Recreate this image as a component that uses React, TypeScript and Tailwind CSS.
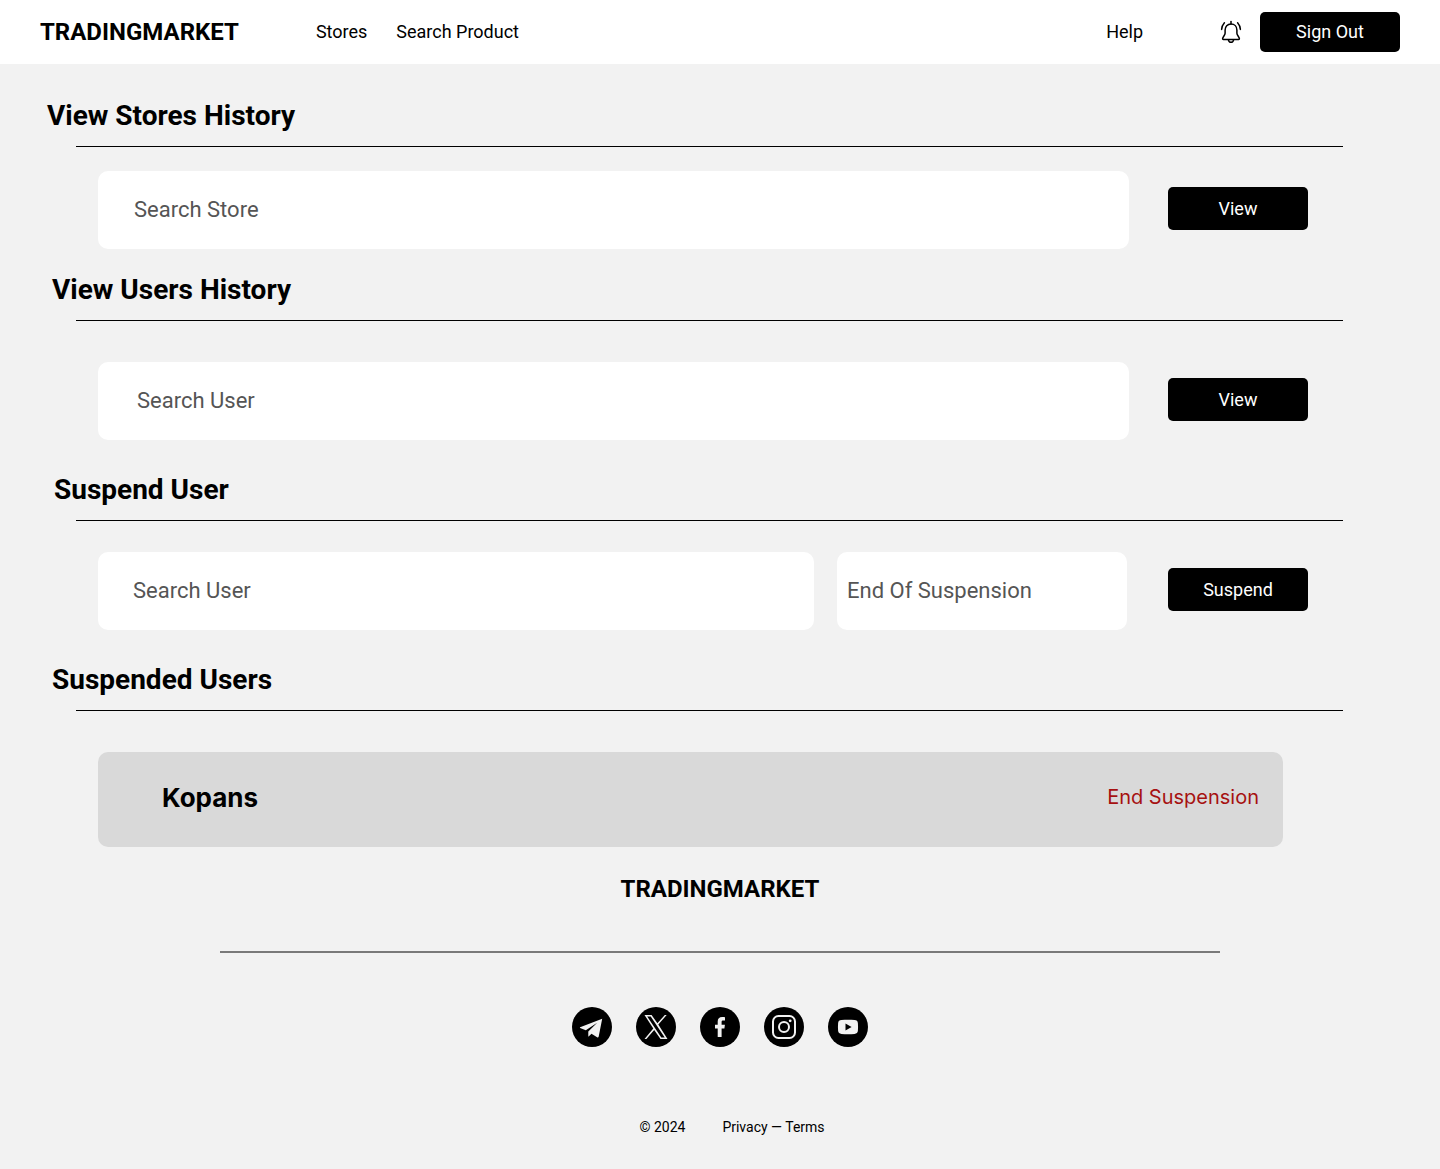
import React from "react";

const fieldClass =
  "h-[78px] min-w-0 rounded-[10px] bg-white pb-0.5 text-[22px] text-black outline-none placeholder:text-[#555555] placeholder:opacity-100";

function BellIcon() {
  return (
    <svg viewBox="0 0 24 24" className="size-6" fill="none" stroke="currentColor" strokeWidth="1.5" strokeLinecap="round" strokeLinejoin="round" aria-hidden="true">
      <path d="M12 1.5V4" />
      <path d="M12 4C8.4 4 6.1 6.7 6.1 10V13.2C6.1 15.4 3.6 17 3.6 18.8C3.6 19.2 3.9 19.5 4.3 19.5H19.7C20.1 19.5 20.4 19.2 20.4 18.8C20.4 17 17.9 15.4 17.9 13.2V10C17.9 6.7 15.6 4 12 4Z" />
      <path d="M9.4 19.8C9.7 21.4 10.7 22.3 12 22.3S14.3 21.4 14.6 19.8" />
      <path d="M5.4 2.8C3.8 4.6 2.8 6.8 2.6 9.4" />
      <path d="M18.6 2.8C20.2 4.6 21.2 6.8 21.4 9.4" />
    </svg>
  );
}

function Disc({ label, children }: { label: string; children: React.ReactNode }) {
  return (
    <a href="#" aria-label={label} className="size-10 rounded-full bg-black text-[#f2f2f2]">
      <svg viewBox="0 0 40 40" className="size-10" fill="none" aria-hidden="true">
        {children}
      </svg>
    </a>
  );
}

function Section({ title, indent, gap, children }: { title: string; indent: string; gap: string; children: React.ReactNode }) {
  return (
    <section>
      <h2 className={`${indent} text-[28px] leading-[34px] font-bold`}>{title}</h2>
      <div className="mt-[13px] mr-[97px] ml-[76px] border-t border-black" />
      <div className={`${gap} mr-[132px] ml-[98px] flex items-center`}>{children}</div>
    </section>
  );
}

function Action({ children }: { children: React.ReactNode }) {
  return (
    <button type="button" className="mb-[3px] h-[43px] w-[140px] shrink-0 rounded-[5px] bg-black text-lg text-white">
      {children}
    </button>
  );
}

export default function App() {
  return (
    <div className="min-h-screen bg-[#f2f2f2] font-['Roboto',sans-serif] text-black">
      <header className="flex h-16 items-center bg-white px-10">
        <a href="#" className="text-2xl font-bold">TRADINGMARKET</a>
        <nav className="ml-[77px] flex flex-1 items-center gap-[29px] text-lg">
          <a href="#">Stores</a>
          <a href="#">Search Product</a>
          <a href="#" className="ml-auto">Help</a>
        </nav>
        <button type="button" aria-label="Notifications" className="ml-[76px]">
          <BellIcon />
        </button>
        <button type="button" className="ml-[17px] h-10 w-[140px] rounded-[5px] bg-black text-lg text-white">
          Sign Out
        </button>
      </header>

      <main className="pt-[35px]">
        <Section title="View Stores History" indent="pl-[47px]" gap="mt-6">
          <input type="text" aria-label="Search Store" placeholder="Search Store" className={`${fieldClass} mr-[39px] flex-1 px-9`} />
          <Action>View</Action>
        </Section>
        <div className="h-6" />
        <Section title="View Users History" indent="pl-[52px]" gap="mt-[41px]">
          <input type="text" aria-label="Search User" placeholder="Search User" className={`${fieldClass} mr-[39px] flex-1 px-[39px]`} />
          <Action>View</Action>
        </Section>
        <div className="h-[33px]" />
        <Section title="Suspend User" indent="pl-[54px]" gap="mt-[31px]">
          <input type="text" aria-label="User to suspend" placeholder="Search User" className={`${fieldClass} mr-[23px] flex-1 px-[35px]`} />
          <input type="text" aria-label="End Of Suspension" placeholder="End Of Suspension" className={`${fieldClass} mr-[41px] w-[290px] px-[10px]`} />
          <Action>Suspend</Action>
        </Section>
        <div className="h-[33px]" />
        <Section title="Suspended Users" indent="pl-[52px]" gap="mt-[41px]">
          <div className="mr-[25px] flex h-[95px] flex-1 items-center justify-between rounded-[10px] bg-[#d9d9d9] pr-6 pb-1 pl-16 font-['Inter',sans-serif]">
            <span className="text-[26px] font-bold">Kopans</span>
            <button type="button" className="pb-0.5 text-xl text-[#a61111]">End Suspension</button>
          </div>
        </Section>
      </main>

      <footer className="flex flex-col items-center pt-[26px] pb-8">
        <p className="text-2xl font-bold">TRADINGMARKET</p>
        <div className="mt-[46px] w-full max-w-[1000px] border-t-2 border-[#7a7a7a]" />
        <div className="mt-[54px] flex gap-6">
          <Disc label="Telegram">
            <path fill="currentColor" d="M30.2 11.8L8.1 20.2C7.8 20.4 7.8 20.8 8.1 20.9L13.8 23.2L25.2 15.8L16.3 24.4V29.7L19.5 26.8L25.1 30.3C25.8 30.7 26.5 30.4 26.7 29.6L30.2 11.8Z" />
          </Disc>
          <Disc label="X">
            <path fill="currentColor" fillRule="evenodd" d="M8.5 8H15.6L21.4 16.3L28.8 8H30.7L22.3 17.5L31.5 32H24.5L18.2 22.9L10.4 32H8.5L17.3 21.6L8.5 8ZM11.2 9.5L25.3 30.6H28.7L14.7 9.5H11.2Z" />
          </Disc>
          <Disc label="Facebook">
            <path fill="currentColor" d="M17.7 30V21.4H15V17.8H17.7V14.4C17.7 11.6 19.2 10 22.2 10C23.5 10 24.8 10.2 25 10.3V13.6H23.2C21.8 13.6 21.6 14.2 21.6 15.3V17.8H24.9L24.4 21.4H21.6V30H17.7Z" />
          </Disc>
          <Disc label="Instagram">
            <rect x="9" y="9" width="22" height="22" rx="5.5" stroke="currentColor" strokeWidth="2" />
            <circle cx="20" cy="20" r="5" stroke="currentColor" strokeWidth="2" />
            <circle cx="26.2" cy="13.8" r="1.4" fill="currentColor" />
          </Disc>
          <Disc label="YouTube">
            <path fill="currentColor" fillRule="evenodd" d="M13.5 13.1C17.5 12.7 22.5 12.7 26.5 13.1C28.7 13.2 29.7 14.2 29.9 16.2C30.1 18.6 30.1 21.4 29.9 23.8C29.7 25.8 28.7 26.8 26.5 26.9C22.5 27.3 17.5 27.3 13.5 26.9C11.3 26.8 10.3 25.8 10.1 23.8C9.9 21.4 9.9 18.6 10.1 16.2C10.3 14.2 11.3 13.2 13.5 13.1ZM17.5 16.6V23.4L23.6 20L17.5 16.6Z" />
          </Disc>
        </div>
        <div className="mt-[70px] flex gap-[37px] pl-6 text-sm">
          <span>© 2024</span>
          <span>
            <a href="#">Privacy</a> — <a href="#">Terms</a>
          </span>
        </div>
      </footer>
    </div>
  );
}
